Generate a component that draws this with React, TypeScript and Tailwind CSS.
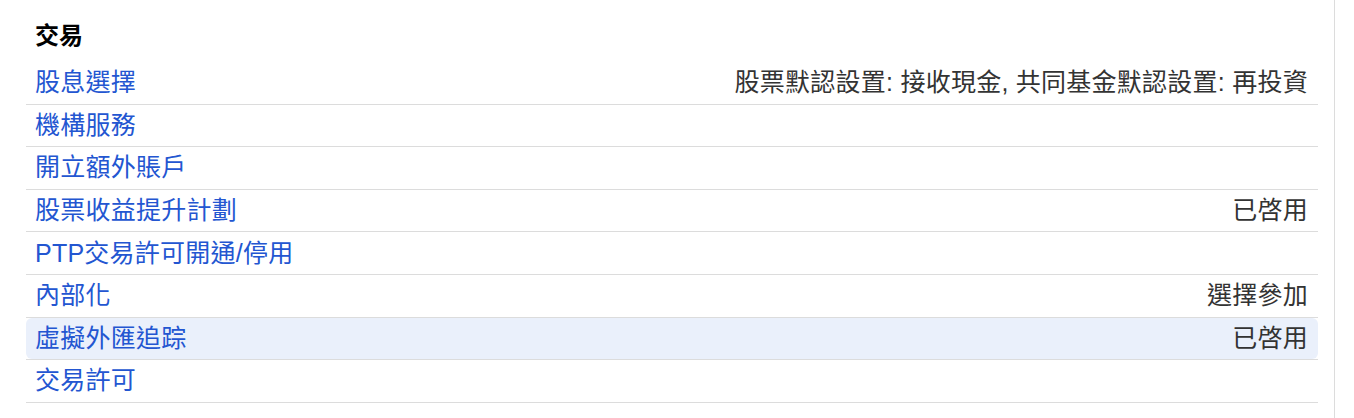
import React from 'react';

type Row = { label: string; value?: string; active?: boolean };

const rows: Row[] = [
  { label: '股息選擇', value: '股票默認設置: 接收現金, 共同基金默認設置: 再投資' },
  { label: '機構服務' },
  { label: '開立額外賬戶' },
  { label: '股票收益提升計劃', value: '已啓用' },
  { label: 'PTP交易許可開通/停用' },
  { label: '內部化', value: '選擇參加' },
  { label: '虛擬外匯追踪', value: '已啓用', active: true },
  { label: '交易許可' },
];

export default function App() {
  return (
    <div
      className="flex min-h-[418px] w-[1354px] bg-white"
      style={{ fontFamily: '"Liberation Sans", "Noto Sans CJK TC", sans-serif' }}
    >
      <div className="w-[1335px] border-r border-[#dcdcdc] pl-[26px] pr-[16px] pt-[20px]">
        {/* Section title */}
        <h2 className="mb-[10px] h-[32px] pl-[9px] text-[24px] font-bold leading-[32px] text-black">交易</h2>

        {/* Settings list */}
        <div className="flex flex-col">
          {rows.map((row) => (
            <div key={row.label} className="h-[42.6px] border-b border-[#dcdcdc]">
              <div
                className={`flex h-full items-center justify-between rounded-[6px] pl-[9px] pr-[10px] tracking-[0.25px] ${
                  row.active ? 'bg-[#eaf0fb]' : ''
                }`}
              >
                <a href="#" className="text-[25px] leading-none text-[#2356d1]">
                  {row.label}
                </a>
                {row.value && <span className="text-[25px] leading-none text-[#333333]">{row.value}</span>}
              </div>
            </div>
          ))}
        </div>
      </div>
    </div>
  );
}
